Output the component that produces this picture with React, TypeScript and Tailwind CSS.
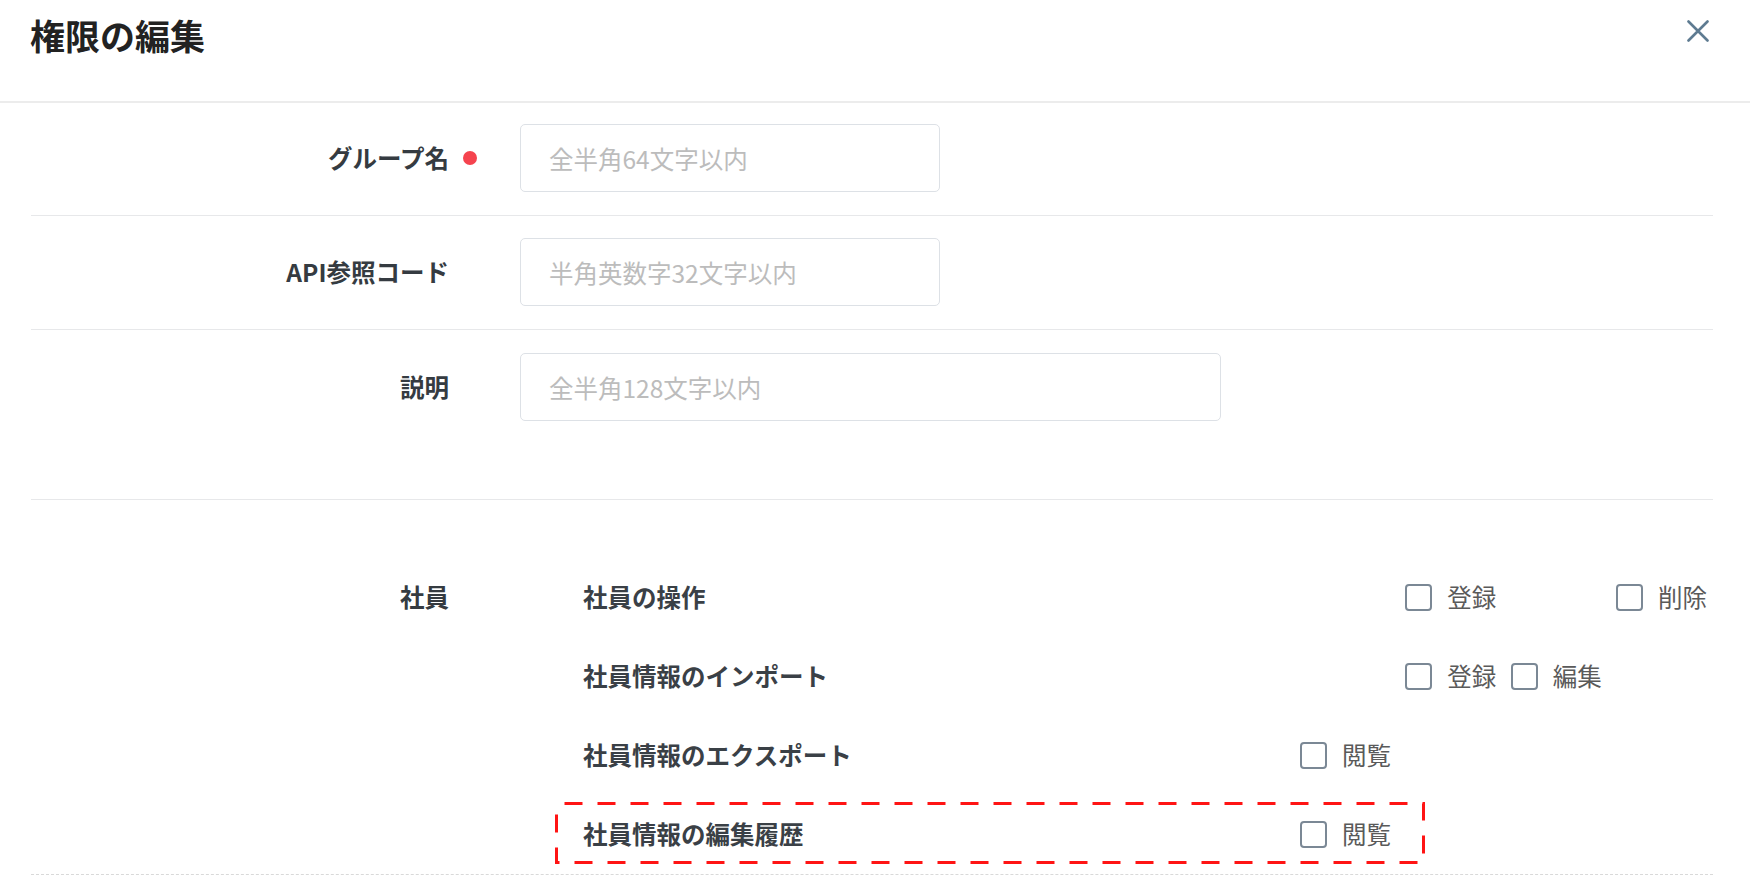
import React from "react";

type Perm = "閲覧" | "登録" | "編集" | "削除";
const COLUMNS: Perm[] = ["閲覧", "登録", "編集", "削除"];

const subItems: { name: string; perms: Perm[] }[] = [
  { name: "社員の操作", perms: ["登録", "削除"] },
  { name: "社員情報のインポート", perms: ["登録", "編集"] },
  { name: "社員情報のエクスポート", perms: ["閲覧"] },
  { name: "社員情報の編集履歴", perms: ["閲覧"] },
];

function FieldRow({
  label,
  required,
  placeholder,
  inputWidth,
  className,
}: {
  label: string;
  required?: boolean;
  placeholder: string;
  inputWidth: string;
  className: string;
}) {
  return (
    <div className={`flex items-center border-b border-[#e7e8ea] ${className}`}>
      <div className="w-[418px] shrink-0 text-right text-[24.5px] font-bold leading-none text-[#353b41]">{label}</div>
      <div className="flex w-[71px] shrink-0 items-center">
        {required && <span className="ml-[14px] block h-[14px] w-[14px] rounded-full bg-[#f5434e]" />}
      </div>
      <input
        placeholder={placeholder}
        className={`${inputWidth} h-[68px] shrink-0 rounded-[5px] border border-[#dde1e6] bg-white px-[28px] text-[24.5px] text-[#333] outline-none placeholder:text-[#bcbcbc]`}
      />
    </div>
  );
}

function Check({ label }: { label: string }) {
  return (
    <label className="flex items-center">
      <span className="block h-[27px] w-[27px] shrink-0 rounded-[4px] border-[2.5px] border-[#7b8895] bg-white" />
      <span className="ml-[15px] text-[24.5px] leading-none text-[#5a5a5a]">{label}</span>
    </label>
  );
}

export default function App() {
  return (
    <div className="relative h-[882px] w-[1750px] overflow-hidden bg-white font-['Noto_Sans_CJK_JP','Noto_Sans',sans-serif]">
      {/* dialog header */}
      <header className="flex h-[103px] items-start justify-between border-b-2 border-[#ececec] pl-[30px] pr-[41px]">
        <h1 className="mt-[13px] text-[35px] font-bold leading-[44px] text-[#222]">権限の編集</h1>
        <button className="mt-[20px] h-[22px] w-[22px]" aria-label="閉じる">
          <svg viewBox="0 0 22 22" width="22" height="22">
            <path d="M1.5 1.5 L20.5 20.5 M20.5 1.5 L1.5 20.5" stroke="#5e7b91" strokeWidth="2.6" strokeLinecap="round" />
          </svg>
        </button>
      </header>

      <div className="pl-[31px] pr-[37px]">
        <FieldRow label="グループ名" required placeholder="全半角64文字以内" inputWidth="w-[420px]" className="pt-[21px] pb-[23px]" />
        <FieldRow label="API参照コード" placeholder="半角英数字32文字以内" inputWidth="w-[420px]" className="pt-[22px] pb-[23px]" />
        <FieldRow label="説明" placeholder="全半角128文字以内" inputWidth="w-[701px]" className="pt-[23px] pb-[78px]" />

        {/* permission section */}
        <div className="flex items-start border-b border-dashed border-[#d9d9d9] pt-[58px]">
          <div className="flex h-[79px] w-[418px] shrink-0 items-center justify-end text-[24.5px] font-bold leading-none text-[#353b41]">
            社員
          </div>
          <div className="w-[71px] shrink-0" />
          <div className="flex shrink-0 flex-col">
            {subItems.map((item) => (
              <div key={item.name} className="flex h-[79px] items-center">
                <div className="w-[780px] shrink-0 pl-[63px] text-[24.5px] font-bold leading-none text-[#3a4046]">{item.name}</div>
                <div className="grid shrink-0 grid-cols-[repeat(4,105.33px)]">
                  {COLUMNS.map((c) => (
                    <div key={c}>{item.perms.includes(c) ? <Check label={c} /> : null}</div>
                  ))}
                </div>
              </div>
            ))}
          </div>
        </div>
      </div>

      {/* highlight frame around the edit-history row */}
      <svg className="pointer-events-none absolute left-[554px] top-[801px]" width="872" height="64">
        <rect
          x="2.5"
          y="2.5"
          width="867"
          height="59"
          fill="none"
          stroke="#ff1414"
          strokeWidth="3"
          strokeDasharray="18 15"
          strokeDashoffset="25"
        />
      </svg>
    </div>
  );
}
